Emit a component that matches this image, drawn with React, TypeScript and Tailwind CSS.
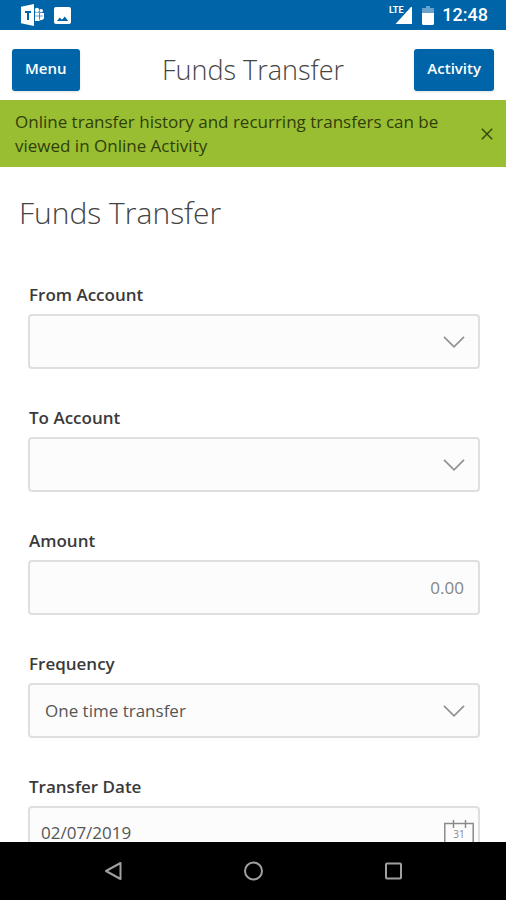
import { useState } from "react";
import type { ReactNode } from "react";
import clsx from "clsx";

const FIELD =
  "block h-[55px] w-full appearance-none rounded-sm border-2 border-[#dfdfdf] bg-[#fcfcfc] text-[17px] text-[#555] outline-none focus:border-[#0065a8]";

const ACCOUNTS = ["Checking", "Savings"];
const FREQUENCIES = ["One time transfer", "Weekly", "Monthly"];

export default function App() {
  const [showNotice, setShowNotice] = useState(true);
  const [from, setFrom] = useState("");
  const [to, setTo] = useState("");
  const [amount, setAmount] = useState("");
  const [frequency, setFrequency] = useState(FREQUENCIES[0]);
  const [date, setDate] = useState("02/07/2019");

  return (
    <div className="flex h-screen flex-col overflow-hidden bg-white font-['Open_Sans',sans-serif]">
      <StatusBar />

      <header className="grid shrink-0 grid-cols-[1fr_auto_1fr] items-center bg-white px-3 pt-[19px] pb-[9px]">
        <HeaderButton label="Menu" className="justify-self-start" />
        <span className="text-[27px] leading-9 font-light text-[#444]">Funds Transfer</span>
        <HeaderButton label="Activity" className="justify-self-end" />
      </header>

      {showNotice && (
        <div className="flex shrink-0 items-center justify-between bg-[#9abe31] pt-[10px] pr-[9px] pb-[9px] pl-[15px]">
          <p className="text-[17px] leading-6 text-[#2f3f0a]">
            Online transfer history and recurring transfers can be viewed in Online Activity
          </p>
          <button
            type="button"
            aria-label="Dismiss"
            onClick={() => setShowNotice(false)}
            className="ml-6 shrink-0 p-1 text-[#34450c]"
          >
            <svg viewBox="0 0 12 12" className="size-3" fill="none" stroke="currentColor" strokeWidth="1.4">
              <path d="M.8.8l10.4 10.4M11.2.8L.8 11.2" />
            </svg>
          </button>
        </div>
      )}

      <main className="min-h-0 flex-1 overflow-hidden">
        <h1 className="px-[19px] pt-[26px] text-[30px] leading-10 font-light text-[#444]">Funds Transfer</h1>

        <form className="flex flex-col gap-[37px] pt-[50px] pr-[26px] pb-10 pl-7">
          <Field id="from" label="From Account">
            <Select id="from" value={from} options={["", ...ACCOUNTS]} onChange={setFrom} />
          </Field>
          <Field id="to" label="To Account">
            <Select id="to" value={to} options={["", ...ACCOUNTS]} onChange={setTo} />
          </Field>
          <Field id="amount" label="Amount">
            <input
              id="amount"
              inputMode="decimal"
              placeholder="0.00"
              value={amount}
              onChange={(e) => setAmount(e.target.value)}
              className={clsx(FIELD, "pr-[14px] pl-4 text-right placeholder:text-[#858585]")}
            />
          </Field>
          <Field id="frequency" label="Frequency">
            <Select id="frequency" value={frequency} options={FREQUENCIES} onChange={setFrequency} />
          </Field>
          <Field id="date" label="Transfer Date">
            <input
              id="date"
              value={date}
              onChange={(e) => setDate(e.target.value)}
              className={clsx(FIELD, "pr-12 pb-[2px] pl-[11px]")}
            />
            <CalendarIcon />
          </Field>
        </form>
      </main>

      <nav className="flex h-[58px] shrink-0 items-center justify-center gap-[116px] bg-black text-[#a0a0a0]">
        <button type="button" aria-label="Back">
          <svg viewBox="0 0 24 24" className="size-6" fill="none" stroke="currentColor" strokeWidth="2">
            <path d="M19.500 4v16L5 12z" strokeLinejoin="round" />
          </svg>
        </button>
        <button type="button" aria-label="Home">
          <svg viewBox="0 0 24 24" className="size-6" fill="none" stroke="currentColor" strokeWidth="2">
            <circle cx="12.500" cy="12" r="8.5" />
          </svg>
        </button>
        <button type="button" aria-label="Recent apps">
          <svg viewBox="0 0 24 24" className="size-6" fill="none" stroke="currentColor" strokeWidth="2">
            <rect x="5" y="4.5" width="15" height="15" rx="1" />
          </svg>
        </button>
      </nav>
    </div>
  );
}

function HeaderButton({ label, className }: { label: string; className: string }) {
  return (
    <button
      type="button"
      className={clsx(
        "h-[42px] rounded-[3px] bg-[#0065a8] px-[13px] pb-1 text-[15px] font-semibold text-white shadow-sm",
        className,
      )}
    >
      {label}
    </button>
  );
}

function Field({ id, label, children }: { id: string; label: string; children: ReactNode }) {
  return (
    <div>
      <label htmlFor={id} className="block pb-[7px] pl-px text-[17px] leading-6 font-semibold text-[#3a3a3a]">
        {label}
      </label>
      <div className="relative">{children}</div>
    </div>
  );
}

function Select({
  id,
  value,
  options,
  onChange,
}: {
  id: string;
  value: string;
  options: string[];
  onChange: (value: string) => void;
}) {
  return (
    <>
      <select
        id={id}
        value={value}
        onChange={(e) => onChange(e.target.value)}
        className={clsx(FIELD, "pr-12 pl-[15px]")}
      >
        {options.map((o) => (
          <option key={o} value={o}>
            {o}
          </option>
        ))}
      </select>
      <svg
        viewBox="0 0 22 12"
        className="pointer-events-none absolute inset-y-0 right-[15px] my-auto h-3 w-[22px]"
        fill="none"
        stroke="#929292"
        strokeWidth="1.7"
      >
        <path d="M1 .8l10 10L21 .8" />
      </svg>
    </>
  );
}

function CalendarIcon() {
  return (
    <svg
      viewBox="0 0 30 30"
      className="pointer-events-none absolute top-[13px] right-[6px] size-[30px]"
      fill="none"
      stroke="#8a8a8a"
      strokeWidth="1.5"
    >
      <path d="M.8 4.5h28.400v24.500H.8zM9.500 1v8M21.500 1v8" />
      <text x="15" y="19" textAnchor="middle" fontSize="10" fill="#8a8a8a" stroke="none">
        31
      </text>
    </svg>
  );
}

function StatusBar() {
  return (
    <div className="flex h-[30px] shrink-0 items-center justify-between bg-[#0065a8] pr-[18px] pl-[21px] text-white">
      <div className="flex items-center gap-[10px]">
        <svg viewBox="0 0 23 22" className="h-[22px] w-[23px]">
          <path d="M0 2.800L13 0v22L0 19.200z" fill="#fff" />
          <path d="M4 7h6v2H8v7H6V9H4z" fill="#0065a8" />
          <circle cx="16" cy="6" r="2.200" fill="#fff" />
          <circle cx="20.200" cy="6.800" r="1.800" fill="#fff" />
          <path d="M14 8.600h4.600v8.400H14zM19 9h4v5q-.6 2.200-4 2.200z" fill="#fff" />
          <path d="M14 12h8M18.600 9v6" stroke="#0065a8" strokeWidth=".6" />
        </svg>
        <svg viewBox="0 0 17 17" className="size-[17px]">
          <rect width="17" height="17" rx="2" fill="#fff" />
          <path d="M3 14l2.800-3.400L8 12.800l2.800-3.400L14.200 14z" fill="#0065a8" />
        </svg>
      </div>
      <div className="flex items-center gap-2 font-[Roboto,sans-serif]">
        <div className="flex items-center gap-[10px]">
          <svg viewBox="0 0 23 20" className="h-5 w-[23px]" aria-label="LTE signal">
            <path d="M21.800 2.200q1.200-1 1.200.5V19H6.500z" fill="#fff" />
            <path d="M0 0h14v10H0z" fill="#0065a8" />
            <text x="0" y="8" fontSize="9" fontWeight="700" fill="#fff">
              LTE
            </text>
          </svg>
          <svg viewBox="0 0 12 19" className="h-[19px] w-3">
            <path d="M4 0h4v2h4v5H0V2h4z" fill="#fff" opacity=".4" />
            <path d="M0 7h12v10.500q0 1.500-1.500 1.500h-9Q0 19 0 17.500z" fill="#fff" />
          </svg>
        </div>
        <span className="text-lg leading-[30px] font-medium">12:48</span>
      </div>
    </div>
  );
}
